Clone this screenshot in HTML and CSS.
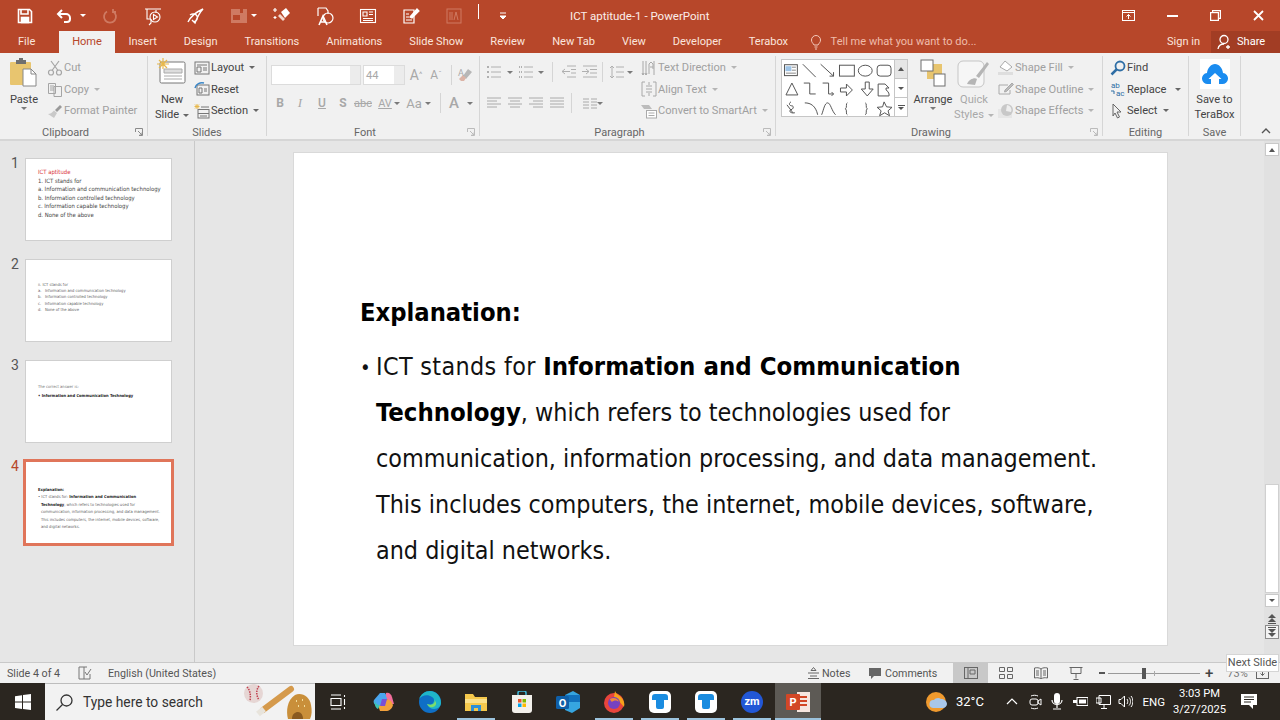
FILE: index.html
```html
<!DOCTYPE html>
<html lang="en">
<head>
<meta charset="utf-8">
<title>ICT aptitude-1 - PowerPoint</title>
<link rel="stylesheet" href="styles.css">
</head>
<body>
<div class="app">
  <header class="titlebar">
    <div class="qat">
      <span class="s"><svg width="16" height="16" viewBox="0 0 16 16" fill="none" stroke="#fff" stroke-width="1.6"><path d="M1.5 1.5h11l2 2v11h-13z"/><path d="M4 2v4h7V2" /><rect x="4.5" y="9.5" width="7" height="5" fill="#fff"/></svg></span>
      <span class="s d40"><svg width="18" height="16" viewBox="0 0 18 16" fill="none" stroke="#fff" stroke-width="2"><path d="M6 2 2 6l4 4"/><path d="M2 6h8a4 4 0 0 1 4 4v1a3 3 0 0 1-3 3H8"/></svg></span>
      <span class="s d18"><i class="caret white"></i></span>
      <span class="s d27 off"><svg width="16" height="16" viewBox="0 0 16 16" fill="none" stroke="#cf7a62" stroke-width="1.8"><path d="M5 3.500a6 6 0 1 0 6 0"/><path d="M11 1v3h3"/></svg></span>
      <span class="s d43"><svg width="20" height="20" viewBox="0 0 20 20" fill="none" stroke="#fff" stroke-width="1.1"><path d="M2 3h16M4 3v10h3M8 13v4l-2 2M13 4v3"/><circle cx="12" cy="11" r="5"/><path d="m10.5 8.500 4 2.500-4 2.500z"/></svg></span>
      <span class="s d43"><svg width="20" height="20" viewBox="0 0 20 20" fill="none" stroke="#fff" stroke-width="1.4"><path d="M2 16c3-6 8-10 15-13-4 4-6 9-8 14l-3-3M4 9c3-2 6-1 7 1s0 5-3 6"/></svg></span>
      <span class="s d43 off"><svg width="20" height="18" viewBox="0 0 20 18"><rect x="2" y="2" width="16" height="14" fill="#cf7a62"/><rect x="4" y="8" width="7" height="5" fill="#b7472a"/><rect x="11" y="2" width="3" height="4" fill="#b7472a"/></svg></span>
      <span class="s d15"><i class="caret white"></i></span>
      <span class="s d28"><svg width="20" height="20" viewBox="0 0 20 20"><path d="m9 6 5-4 4 5-5 5z" fill="#fff"/><path d="m8 8 5 5-2 2-5-5z" fill="#f6d9ce"/><path d="M3 2v4M1 4h4M3 10v3M1.500 11.500h3" stroke="#fff" stroke-width="1.200"/></svg></span>
      <span class="s d43"><svg width="20" height="20" viewBox="0 0 20 20" fill="none" stroke="#fff" stroke-width="1.200"><path d="M3 2h8l2 3v3"/><path d="M3 2v8"/><circle cx="13" cy="12" r="5"/><path d="m4 19 4-9 4 9M6 16h4" stroke-width="1.600"/></svg></span>
      <span class="s d43"><svg width="18" height="16" viewBox="0 0 18 16" fill="none" stroke="#fff" stroke-width="1.100"><rect x="1.500" y="1.500" width="15" height="13"/><path d="M4 4h4v4H4zM10 4h4M10 6.500h4M4 10.500h10M4 12.500h10"/></svg></span>
      <span class="s d43"><svg width="18" height="18" viewBox="0 0 18 18" fill="none" stroke="#fff" stroke-width="1.200"><path d="M2 3h10v13H2z"/><path d="M4 7h3M4 10h3M4 13h6"/><path d="m8 10 7-8 2 2-7 7z" fill="#fff"/></svg></span>
      <span class="s d43 off"><svg width="16" height="16" viewBox="0 0 16 16" fill="none" stroke="#cf7a62"><rect x="1" y="1" width="14" height="14"/><path d="M4 4v8M6 4v8M8 12l2-8 2 8"/></svg></span>
      <span class="s d24"><i class="qline"></i></span>
      <span class="s d25"><svg width="8" height="8" viewBox="0 0 8 8"><path d="M1 1h6M1 4h6l-3 3z" stroke="#fff" fill="#fff" stroke-width="1"/></svg></span>
    </div>
    <div class="wintitle">ICT aptitude-1 - PowerPoint</div>
    <div class="winctrls">
      <svg width="13" height="11" viewBox="0 0 13 11" fill="none" stroke="#fff"><rect x=".5" y=".5" width="12" height="10"/><path d="M.5 2.500h12M6.500 9V4.500M4.500 6.500l2-2 2 2" /></svg>
      <i class="winmin"></i>
      <svg width="11" height="11" viewBox="0 0 11 11" fill="none" stroke="#fff" stroke-width="1.200"><rect x=".6" y="2.600" width="7.800" height="7.800"/><path d="M2.600 2.600V.6h7.800v7.800H8.400"/></svg>
      <svg width="11" height="11" viewBox="0 0 11 11" stroke="#fff" stroke-width="1.800"><path d="m1 1 9 9M10 1l-9 9"/></svg>
    </div>
  </header>

  <nav class="tabs">
    <span class="file">File</span>
    <span class="tab active">Home</span>
    <span class="tab">Insert</span>
    <span class="tab">Design</span>
    <span class="tab">Transitions</span>
    <span class="tab">Animations</span>
    <span class="tab">Slide Show</span>
    <span class="tab">Review</span>
    <span class="tab">New Tab</span>
    <span class="tab">View</span>
    <span class="tab">Developer</span>
    <span class="tab">Terabox</span>
    <span class="tell"><svg width="12" height="15" viewBox="0 0 12 15" fill="none" stroke="#f3c9bb"><path d="M4 10C3 8 1.500 7.500 1.500 5a4.500 4.500 0 0 1 9 0C10.500 7.500 9 8 8 10zM4.500 12h3M5 14h2"/></svg>Tell me what you want to do...</span>
    <span class="signin">Sign in</span>
    <span class="share"><svg width="16" height="16" viewBox="0 0 16 16" fill="none" stroke="#fff" stroke-width="1.300"><circle cx="7" cy="5.500" r="4"/><path d="M1 15c.5-3 3-5 6-5M11 11v4M9 13h4"/></svg>Share</span>
  </nav>

  <section class="ribbon">
    <div class="group g-clip">
      <div class="gbody">
        <div class="big w40">
          <div class="bigicon"><svg width="28" height="30" viewBox="0 0 28 30"><rect x="0" y="4" width="21" height="23" rx="1" fill="#e8c56f"/><path d="M6 2h3V0h4v2h3v4H6z" fill="#6f6f6f"/><path d="M13 11h8l5 5v12H13z" fill="#fff" stroke="#888"/><path d="M21 11v5h5" fill="none" stroke="#888"/></svg></div>
          <span>Paste</span><i class="caret"></i>
        </div>
        <div class="rows">
          <div class="row off"><svg class="ico" viewBox="0 0 16 16" fill="none" stroke="#a5a5a5" stroke-width="1.200"><circle cx="4" cy="12.500" r="2.500"/><circle cx="12" cy="12.500" r="2.500"/><path d="M5 10.500 12 1M11 10.500 4 1"/></svg>Cut</div>
          <div class="row off"><svg class="ico" viewBox="0 0 16 16" fill="none" stroke="#a5a5a5"><path d="M1.500 2.500h7v10h-7zM3 5h4M3 7h4M3 9h4M7 5.500h7.500v10H7z"/></svg>Copy<i class="caret ml"></i></div>
          <div class="row off"><svg class="ico" viewBox="0 0 16 16"><path d="m8 7 5-5 2 2-5 5z" fill="#9a9a9a"/><path d="M7 7.500 10 10l-3 5-6-4c2 0 4-1 6-3.500z" fill="#c9c9c9"/></svg>Format Painter</div>
        </div>
      </div>
      <div class="glabel"><span></span><span>Clipboard</span><svg class="launch" viewBox="0 0 8 8" fill="none" stroke="#8a8a8a"><path d="M.5 4V.5H7.500V7.500H4M3 3l4 4M7 4.500V7H4.500"/></svg></div>
    </div>

    <div class="group g-slides">
      <div class="gbody">
        <div class="big w40">
          <div class="bigicon"><svg width="30" height="30" viewBox="0 0 30 30"><rect x="3" y="4" width="25" height="21" rx="1.500" fill="#fff" stroke="#777"/><path d="M7 15h18v-4H7zM7 18h18M7 21h18" fill="#ddd" stroke="#aaa"/><path d="M6 0v11M0 6h12M2 2l8 8M10 2l-8 8" stroke="#e8b84a" stroke-width="1.200"/></svg></div>
          <span>New</span><span>Slide<i class="caret ml2"></i></span>
        </div>
        <div class="rows">
          <div class="row"><svg class="ico" viewBox="0 0 16 16" fill="none" stroke="#777"><rect x="1" y="2" width="14" height="12"/><path d="M3 5h10M3 7h4v5H3zM9 8h4M9 10h4" /></svg>Layout<i class="caret ml2"></i></div>
          <div class="row"><svg class="ico" viewBox="0 0 16 16" fill="none" stroke="#777"><rect x="3" y="4" width="12" height="10"/><path d="M5 7h3v5H5zM10 8h3M10 10h3"/><path d="M1 7c1-4 5-6 9-5" stroke="#3a87c8" stroke-width="1.500"/></svg>Reset</div>
          <div class="row"><svg class="ico" viewBox="0 0 16 16" fill="none" stroke="#777"><rect x="4" y="6.500" width="11" height="8.500"/><path d="M4 10.500h11M6 13h7M7 4h8"/><path d="M3 1v5M.5 3.500h5M1 1.500l4 4M5 1.500l-4 4" stroke="#e8b84a"/></svg>Section<i class="caret ml2"></i></div>
        </div>
      </div>
      <div class="glabel"><span></span><span>Slides</span><span></span></div>
    </div>

    <div class="group g-font">
      <div class="gbody col">
        <div class="fontrow1">
          <div class="combo wide"><i class="caret"></i></div>
          <div class="combo narrow"><span>44</span><i class="caret"></i></div>
          <span class="s d21 gt">A<sup>^</sup></span>
          <span class="s d20 gts">A<sup>ˇ</sup></span>
          <span class="s d15"><i class="vsep"></i></span>
          <span class="s d14"><svg width="16" height="16" viewBox="0 0 16 16"><path d="m6 9 5-7 4 3-6 7z" fill="#b7b7b7"/><path d="M2 12 6 8l3 3-2 3H4z" fill="#dbb3a6"/><text x="1" y="9" font-size="9" fill="#aaa" font-family="Roboto, sans-serif">A</text></svg></span>
        </div>
        <div class="fontrow2">
          <span class="s first t-b">B</span>
          <span class="s d20 t-i">I</span>
          <span class="s d22 t-u">U</span>
          <span class="s d21 t-b">S</span>
          <span class="s d20 t-abc">abc</span>
          <span class="s d22 t-av">AV</span>
          <span class="s d12"><i class="caret"></i></span>
          <span class="s d17 t-g">Aa</span>
          <span class="s d14"><i class="caret"></i></span>
          <span class="s d12"><i class="vsep"></i></span>
          <span class="s d14 t-a">A</span>
          <span class="s d16"><i class="caret"></i></span>
        </div>
      </div>
      <div class="glabel"><span></span><span>Font</span><svg class="launch" viewBox="0 0 8 8" fill="none" stroke="#bbb"><path d="M.5 4V.5H7.500V7.500H4M3 3l4 4M7 4.500V7H4.500"/></svg></div>
    </div>

    <div class="group g-para">
      <div class="gbody">
        <div class="paraleft">
          <div class="pararow1">
            <span class="s"><svg class="ico" viewBox="0 0 16 16" stroke="#b0b0b0"><path d="M1 3h2M1 8h2M1 13h2" stroke-width="2"/><path d="M5 3h10M5 8h10M5 13h10"/></svg></span>
            <span class="s d16"><i class="caret"></i></span>
            <span class="s d16"><svg class="ico" viewBox="0 0 16 16" stroke="#b0b0b0"><path d="M1 3h3M1 8h3M1 13h3" stroke-width="2" stroke-dasharray="1 1"/><path d="M6 3h9M6 8h9M6 13h9"/></svg></span>
            <span class="s d15"><i class="caret"></i></span>
            <span class="s d11"><i class="vsep"></i></span>
            <span class="s d17"><svg class="ico" viewBox="0 0 16 16" stroke="#b0b0b0" fill="none"><path d="M6 2h9M10 5.500h5M10 9h5M6 13h9M9 7.500H1M4 5 1 7.500 4 10"/></svg></span>
            <span class="s d21"><svg class="ico" viewBox="0 0 16 16" stroke="#b0b0b0" fill="none"><path d="M1 2h14M8 5.500h7M8 9h7M1 13h14M0 7.500h7M4 5l3 2.500L4 10"/></svg></span>
            <span class="s d12"><i class="vsep"></i></span>
            <span class="s d15"><svg class="ico" viewBox="0 0 16 16" stroke="#b0b0b0" fill="none"><path d="M7 3h8M7 8h8M7 13h8M3 2v12M1 4l2-2 2 2M1 12l2 2 2-2"/></svg></span>
            <span class="s d13"><i class="caret"></i></span>
          </div>
          <div class="pararow2">
            <span class="s"><svg class="ico" viewBox="0 0 16 16" stroke="#aaa"><path d="M1 3h14M1 6h10M1 9h14M1 12h10"/></svg></span>
            <span class="s d21"><svg class="ico" viewBox="0 0 16 16" stroke="#aaa"><path d="M1 3h14M3 6h10M1 9h14M3 12h10"/></svg></span>
            <span class="s d21"><svg class="ico" viewBox="0 0 16 16" stroke="#aaa"><path d="M1 3h14M5 6h10M1 9h14M5 12h10"/></svg></span>
            <span class="s d21"><svg class="ico" viewBox="0 0 16 16" stroke="#aaa"><path d="M1 3h14M1 6h14M1 9h14M1 12h14"/></svg></span>
            <span class="s d14"><i class="vsep"></i></span>
            <span class="s d19"><svg class="ico" viewBox="0 0 16 16" stroke="#aaa"><path d="M1 4h6M1 7h6M1 10h6M1 13h6M9 4h6M9 7h6M9 10h6M9 13h6"/></svg></span>
            <span class="s d10 nudge"><i class="caret"></i></span>
          </div>
        </div>
        <div class="rows">
          <div class="row off"><svg class="ico" viewBox="0 0 16 16" fill="none" stroke="#a8a8a8"><path d="M2 1v14M5 1v14M1 13l1 2 1-2M4 13l1 2 1-2M8 14V4l2-2 2 2v5M9 7h3M13 1v14"/></svg>Text Direction<i class="caret ml"></i></div>
          <div class="row off"><svg class="ico" viewBox="0 0 16 16" fill="none" stroke="#a8a8a8"><path d="M1 1v14M1 1h3M1 15h3M15 1v14M15 1h-3M15 15h-3M5 5h6M5 8h6M5 11h6M8 1v3M8 12v3"/></svg>Align Text<i class="caret ml"></i></div>
          <div class="row off"><svg class="ico" viewBox="0 0 16 16"><path d="M0 2h8l3 4H3z" fill="#bcbcbc"/><rect x="5.500" y="7.500" width="10" height="7.500" fill="#fff" stroke="#aaa"/><path d="M7.500 10h6M7.500 12.500h6" stroke="#aaa"/></svg>Convert to SmartArt<i class="caret ml"></i></div>
        </div>
      </div>
      <div class="glabel"><span></span><span>Paragraph</span><svg class="launch" viewBox="0 0 8 8" fill="none" stroke="#bbb"><path d="M.5 4V.5H7.500V7.500H4M3 3l4 4M7 4.500V7H4.500"/></svg></div>
    </div>

    <div class="group g-draw">
      <div class="gbody">
        <div class="gallery">
          <svg width="113" height="56" viewBox="0 0 113 56" fill="none" stroke="#555">
            <rect x="2.500" y="3.500" width="13" height="11" fill="#fff"/><rect x="3.500" y="5" width="6" height="5" fill="#9dc3e6" stroke="none"/><path d="M10 6h4M10 9h4M4 12h10" stroke="#888"/>
            <path d="m21 3 13 13M39 3l13 12M52 15v-4M52 15h-4"/>
            <rect x="58" y="4" width="15" height="11"/><ellipse cx="84" cy="9.500" rx="7" ry="5.500"/><rect x="96" y="4" width="14" height="11" rx="3"/>
            <path d="m10 22 6 12H4zM22 22h6v11h6M41 22h6v11h5M50 31l2 2-2 2M59 27h6v-4l6 6-6 6v-4h-6zM84 21v7h-4l6 7 6-7h-4v-7z"/>
            <path d="M97 23h7l4 4h-3v2a6 6 0 0 1 3 4v2H97z"/>
            <path d="M9 41c-3 2-1 4 1 4s2 3-1 4 0 4 4 3M5 44l6 8" stroke-width="1"/>
            <path d="M23 42c6 0 11 3 13 12M40 54c2-5 3-12 6-12s4 8 8 12"/>
            <path d="M66 42c-2 0 0 5-2 6 2 1 0 6 2 6M84 42c2 0 0 5 2 6-2 1 0 6-2 6" />
            <path d="m103 41 2.500 5 5.500.5-4 3.500 1.500 5-5-3-5 3 1.500-5-4-3.500 5.500-.5z"/>
          </svg>
          <div class="gscroll">
            <span class="gbtn dim"><i class="caret up"></i></span>
            <span class="gbtn"><i class="caret dark"></i></span>
            <span class="gbtn more"><i class="bar"></i><i class="caret dark"></i></span>
          </div>
        </div>
        <div class="big w40 arrange">
          <div class="bigicon"><svg width="28" height="28" viewBox="0 0 28 28"><rect x="8" y="5" width="15" height="15" fill="#e8c56f"/><rect x="2" y="1" width="12" height="11" fill="#fff" stroke="#6f6f6f"/><rect x="15" y="15" width="11" height="12" fill="#fff" stroke="#6f6f6f"/></svg></div>
          <span>Arrange</span><i class="caret"></i>
        </div>
        <div class="big w40 off quick">
          <div class="bigicon"><svg width="34" height="30" viewBox="0 0 34 30"><rect x="1" y="3" width="26" height="26" rx="5" fill="#f6f6f6" stroke="#c5c5c5"/><path d="M10 26c2-5 8-7 10-5l-2 6zM19 18 30 4l2 2-10 14z" fill="#b5b5b5"/></svg></div>
          <span>Quick</span><span>Styles<i class="caret ml"></i></span>
        </div>
        <div class="rows shapes">
          <div class="row off"><svg class="ico" viewBox="0 0 16 16"><path d="m2 7 5-6 7 6-5 4z" fill="#fff" stroke="#aaa"/><rect x="0" y="12" width="15" height="3" fill="#dedede"/></svg>Shape Fill<i class="caret ml"></i></div>
          <div class="row off"><svg class="ico" viewBox="0 0 16 16" fill="none" stroke="#aaa"><path d="M1 4h9M1 4v9h11V9"/><path d="m7 9 7-7 1.500 1.500-7 7-2 .5z" fill="#bbb"/></svg>Shape Outline<i class="caret ml"></i></div>
          <div class="row off"><svg class="ico" viewBox="0 0 16 16"><rect x="0" y="6" width="14" height="9" fill="#e6e6e6"/><circle cx="9" cy="7" r="6" fill="#c8c8c8"/><path d="M9 2a5 5 0 0 1 4 7l-5-1z" fill="#eee"/></svg>Shape Effects<i class="caret ml"></i></div>
        </div>
      </div>
      <div class="glabel"><span></span><span>Drawing</span><svg class="launch" viewBox="0 0 8 8" fill="none" stroke="#bbb"><path d="M.5 4V.5H7.500V7.500H4M3 3l4 4M7 4.500V7H4.500"/></svg></div>
    </div>

    <div class="group g-edit">
      <div class="gbody">
        <div class="rows">
          <div class="row"><svg class="ico" viewBox="0 0 16 16" fill="none" stroke="#2f6ea5" stroke-width="1.800"><circle cx="10" cy="6" r="4.500"/><path d="M7 9l-5.500 5.500" stroke-width="2.500"/></svg>Find</div>
          <div class="row"><svg class="ico" viewBox="0 0 16 16"><text x="1" y="7" font-size="8" fill="#2f6ea5" font-family="Roboto, sans-serif">ab</text><text x="6" y="15" font-size="8" fill="#2f6ea5" font-family="Roboto, sans-serif">ac</text><path d="M1 10h3v3" fill="none" stroke="#2f6ea5"/></svg>Replace<i class="caret ml3"></i></div>
          <div class="row"><svg class="ico" viewBox="0 0 16 16" fill="none" stroke="#666"><path d="m3 1 8 8H7l2.500 5-2 1L5 10l-2 3z"/></svg>Select<i class="caret ml2"></i></div>
        </div>
      </div>
      <div class="glabel"><span></span><span>Editing</span><span></span></div>
    </div>

    <div class="group g-save">
      <div class="gbody">
        <div class="big fill">
          <div class="bigicon"><span class="terabox"><svg width="26" height="22" viewBox="0 0 26 22"><path d="M6 21a5.500 5.500 0 0 1-1-11C5.500 5 9 1 13 1s7.500 4 8 9a5.500 5.500 0 0 1-1 11h-3v-5h2.500L13 10l-6.500 6H9v5z" fill="#1a8cf0"/></svg></span></div>
          <span>Save to</span><span>TeraBox</span>
        </div>
      </div>
      <div class="glabel"><span></span><span>Save</span><span></span></div>
    </div>
    <div class="collapse"><svg width="10" height="6" viewBox="0 0 10 6" fill="none" stroke="#555" stroke-width="1.400"><path d="m1 5 4-4 4 4"/></svg></div>
  </section>

  <main class="workspace">
    <aside class="pane">
      <div class="item"><span class="num">1</span>
        <div class="thumb t1"><p class="red">ICT aptitude</p><p>1. ICT stands for</p><p>a. Information and communication technology</p><p>b. Information controlled technology</p><p>c. Information capable technology</p><p>d. None of the above</p></div>
      </div>
      <div class="item"><span class="num">2</span>
        <div class="thumb t2"><p>ii. ICT stands for</p><p>a.&nbsp;&nbsp; Information and communication technology</p><p>b.&nbsp;&nbsp; Information controlled technology</p><p>c.&nbsp;&nbsp; Information capable technology</p><p>d.&nbsp;&nbsp; None of the above</p></div>
      </div>
      <div class="item"><span class="num">3</span>
        <div class="thumb t3"><p>The correct answer is:</p><p><b>• Information and Communication Technology</b></p></div>
      </div>
      <div class="item cur"><span class="num">4</span>
        <div class="thumb t4"><p><b>Explanation:</b></p><p>• ICT stands for: <b>Information and Communication</b></p><p class="ind"><b>Technology</b>, which refers to technologies used for</p><p class="ind">communication, information processing, and data management.</p><p class="ind">This includes computers, the internet, mobile devices, software,</p><p class="ind">and digital networks.</p></div>
      </div>
    </aside>
    <div class="stage">
      <article class="slide">
        <h1>Explanation:</h1>
        <ul>
          <li><span class="lead">ICT stands for </span><b>Information and Communication<br>Technology</b>, which refers to technologies used for<br>communication, information processing, and data management.<br>This includes computers, the internet, mobile devices, software,<br>and digital networks.</li>
        </ul>
      </article>
    </div>
    <div class="vscroll">
      <span class="sbtn"><i class="caret up dark"></i></span>
      <div class="strack"><span class="sthumb"></span></div>
      <span class="sbtn"><i class="caret dark"></i></span>
      <span class="sbtn plain top"><svg width="10" height="10" viewBox="0 0 10 10" fill="#555"><path d="M5 0 9 4H1zM5 4l4 4H1z"/><path d="M1 9h8v1H1z"/></svg></span>
      <span class="sbtn framed"><svg width="10" height="10" viewBox="0 0 10 10" fill="#555"><path d="M1 0h8v1H1zM5 6 1 2h8zM5 10 1 6h8z"/></svg></span>
    </div>
  </main>

  <footer class="status">
    <span class="st-left">Slide 4 of 4</span>
    <svg class="st-note" width="14" height="14" viewBox="0 0 14 14" fill="none" stroke="#777"><path d="M1 1h5v12H1zM6 1h3M6 13h6V8M7 6l2 3 4-6"/></svg>
    <span class="st-lang">English (United States)</span>
    <span class="st-notes"><svg width="11" height="12" viewBox="0 0 11 12" stroke="#666" fill="none"><path d="M0 6h11M2 9h7M0 11.500h11M3 3.500 5.500.5 8 3.500z"/></svg>Notes</span>
    <span class="st-comments"><svg width="12" height="12" viewBox="0 0 12 12" fill="#666"><path d="M0 1h12v8H5l-3 3V9H0z"/></svg>Comments</span>
    <span class="view on"><svg width="14" height="12" viewBox="0 0 14 12" fill="none" stroke="#666"><rect x=".5" y=".5" width="13" height="11"/><path d="M4 .5v11M6 3h5v4H6z"/></svg></span>
    <span class="view"><svg width="14" height="12" viewBox="0 0 14 12" fill="none" stroke="#666"><path d="M.5.5h5v4h-5zM8.500.5h5v4h-5zM.5 7.500h5v4h-5zM8.500 7.500h5v4h-5z"/></svg></span>
    <span class="view"><svg width="14" height="12" viewBox="0 0 14 12" fill="none" stroke="#666"><path d="M7 2C5 .5 3 .5 .5 1v10c2.500-.5 4.500-.5 6.500 1 2-1.500 4-1.500 6.500-1V1C11 .5 9 .5 7 2zM7 2v10M2 4h3M2 6h3M2 8h3M9 4h3M9 6h3M9 8h3"/></svg></span>
    <span class="view"><svg width="14" height="13" viewBox="0 0 14 13" fill="none" stroke="#666"><path d="M.5.5h13M2 .5v6h10v-6M7 6.500v5M4.500 12.500h5"/></svg></span>
    <span class="zoomer"><i class="zm-minus"></i><span class="zm-track"><i class="zm-tick"></i><i class="zm-thumb"></i></span><span class="zm-plus">+</span></span>
    <span class="zm-val">73%</span>
    <svg class="fit" width="13" height="12" viewBox="0 0 13 12" fill="none" stroke="#666"><rect x=".5" y="2.500" width="12" height="9"/><path d="M6.500 3.500v5M4.500 6.500l2 2 2-2"/></svg>
    <span class="tooltip">Next Slide</span>
  </footer>

  <div class="taskbar">
    <span class="start"><svg width="16" height="16" viewBox="0 0 16 16" fill="#fff"><path d="M0 2.200 7 1.200V7.500H0zM8 1 16 0V7.500H8zM0 8.500h7V15L0 14zM8 8.500h8V16l-8-1.100z"/></svg></span>
    <div class="search">
      <svg width="17" height="17" viewBox="0 0 17 17" fill="none" stroke="#333" stroke-width="1.300"><circle cx="10.500" cy="6.500" r="5.500"/><path d="m6.500 10.500-6 6"/></svg>
      <span>Type here to search</span>
      <svg class="promo" width="72" height="37" viewBox="0 0 72 37">
        <circle cx="10.500" cy="10.500" r="9.500" fill="#e6d6d4"/><path d="M4 4c3 3 4 8 3 14M16 3c-3 4-3 9 0 14" stroke="#c0414f" stroke-width="1.500" fill="none" stroke-dasharray="1.500 1"/>
        <path d="M20 27 48 6" stroke="#d59a4c" stroke-width="6" stroke-linecap="round"/><path d="m15 31 6-5" stroke="#e8e4dc" stroke-width="6"/>
        <path d="M45 36c-2-8-1-19 7-24 7-3 15 2 16 10 1 5 1 10-1 14z" fill="#c98f3a"/><path d="M53 18h1M59 17h1M55 23h1M61 23h1" stroke="#f3dc9a" stroke-width="2"/><path d="M49 36c0-5 3-7 6-7s5 3 5 7" fill="#8a5a20"/>
      </svg>
    </div>
    <div class="apps">
      <span class="app-i"><svg width="16" height="16" viewBox="0 0 16 16" fill="none" stroke="#fff" stroke-width="1.100"><path d="M1 1h10M1 15h10M1 4.500h10v7H1zM14.500 1v2M14.500 5v6M14.500 13v2"/></svg></span>
      <span class="app-i"><svg width="22" height="22" viewBox="0 0 22 22"><path d="M7 2h5l3 5-4 7H4c-3 0-4-3-3-5z" fill="#4aa5ef"/><path d="M13 2c3-1 5 1 6 4l2 7-5 0-3-8z" fill="#f26d9c"/><path d="M5 14l5 0 4-6 4 2 2 4c-1 4-4 6-7 6H7z" fill="#f2a13c"/><path d="M9 8h5l-2 7H7z" fill="#7a4fd6"/><path d="M2 9c0 3 2 5 5 5l-2 4C2 17 1 12 2 9z" fill="#3fc4b0"/></svg></span>
      <span class="app-i"><svg width="22" height="22" viewBox="0 0 22 22"><circle cx="11" cy="11" r="11" fill="#0f6fc6"/><path d="M22 12C22 5 17 0 11 0 6 0 2 3 0 8c3-4 9-5 13-2 2 1 3 4 1 6-1 2-4 2-6 1 1 3 4 5 7 5 4 0 7-3 7-6z" fill="#1fb6c9"/><path d="M8 13c3 1 6 1 7-1 1-1 1-2 0-3 3 2 3 6-1 7-3 1-5-1-6-3z" fill="#7ddc6b"/></svg></span>
      <span class="app-i ul"><svg width="22" height="19" viewBox="0 0 22 19"><path d="M0 2h8l2 3h12v14H0z" fill="#f5c84c"/><path d="M0 7h22v4H0z" fill="#fbe08a"/><path d="M6 19v-6h10v6h-3v-3H9v3z" fill="#2c8fd6"/></svg></span>
      <span class="app-i"><svg width="22" height="22" viewBox="0 0 22 22"><path d="M7 4V2a2 2 0 0 1 2-2h4a2 2 0 0 1 2 2v2" fill="none" stroke="#3fb8d9" stroke-width="1.500"/><path d="M1 4h20v15a3 3 0 0 1-3 3H4a3 3 0 0 1-3-3z" fill="#f3f0eb"/><path d="M7 8h3.500v3.500H7z" fill="#e8532b"/><path d="M11.500 8H15v3.500h-3.500z" fill="#7fba00"/><path d="M7 12.500h3.500V16H7z" fill="#00a4ef"/><path d="M11.500 12.500H15V16h-3.500z" fill="#ffb900"/></svg></span>
      <span class="app-i"><svg width="24" height="22" viewBox="0 0 24 22"><path d="M9 4 17 0l7 4v13l-8 5-7-3z" fill="#36a5e0"/><path d="M9 4h15v7H9z" fill="#1271bd"/><rect x="0" y="5" width="13" height="13" rx="1.500" fill="#0f5fa8"/><text x="6.500" y="15.500" text-anchor="middle" font-size="11" font-weight="700" fill="#fff" font-family="Roboto, sans-serif">O</text></svg></span>
      <span class="app-i ul"><svg width="22" height="22" viewBox="0 0 22 22"><circle cx="11" cy="12" r="10" fill="#e8453c"/><path d="M12 0c1 3 4 4 6 6 3 3 4 7 3 10l-6-7-4-3z" fill="#f7a21b"/><circle cx="11" cy="12" r="6" fill="#7542c0"/><path d="M7 8c3-2 8-1 9 3-2-2-5-2-7 0-1-1-2-2-2-3z" fill="#f0883a"/></svg></span>
      <span class="app-i ul"><span class="tb-app"><svg width="16" height="15" viewBox="0 0 16 15"><path d="M3 0h10a3 3 0 0 1 3 3v3h-4v7a2 2 0 0 1-2 2H6a2 2 0 0 1-2-2V6H0V3a3 3 0 0 1 3-3z" fill="#1a8ce0"/></svg></span></span>
      <span class="app-i ul"><span class="tb-app"><svg width="16" height="15" viewBox="0 0 16 15"><path d="M3 0h10a3 3 0 0 1 3 3v3h-4v7a2 2 0 0 1-2 2H6a2 2 0 0 1-2-2V6H0V3a3 3 0 0 1 3-3z" fill="#1a8ce0"/></svg></span></span>
      <span class="app-i ul"><span class="zm">zm</span></span>
      <span class="app-i ul pp"><svg width="24" height="22" viewBox="0 0 24 22"><rect x="11" y="1" width="13" height="20" fill="#f6e6df"/><path d="M14 5h7v2h-7zM14 9h7v2h-7zM14 13h7v2h-7z" fill="#d24726"/><rect x="0" y="3" width="14" height="16" rx="1" fill="#d24726"/><text x="7" y="15" text-anchor="middle" font-size="11" font-weight="700" fill="#fff" font-family="Roboto, sans-serif">P</text></svg></span>
    </div>
    <div class="tray">
      <svg width="22" height="22" viewBox="0 0 22 22"><circle cx="10" cy="11" r="10" fill="#f09a2e"/><path d="M7 17a4 4 0 0 1 1-8c1-2 5-3 7-1 3 0 6 2 6 5 0 2-2 4-4 4z" fill="#a9c7ea"/></svg>
      <span class="temp">32°C</span>
      <svg class="tr-up" width="12" height="7" viewBox="0 0 12 7" fill="none" stroke="#fff" stroke-width="1.200"><path d="m1 6 5-5 5 5"/></svg>
      <svg class="tr-cam" width="13" height="16" viewBox="0 0 13 16" fill="none" stroke="#fff"><path d="M2 2c2-1 5-1 7 0M2 14c2 1 5 1 7 0"/><rect x="1" y="5" width="8" height="6" rx="2"/><path d="m9 7 3-2v6l-3-2z"/></svg>
      <svg class="tr-mic" width="12" height="17" viewBox="0 0 12 17"><rect x="3" y="0" width="6" height="11" rx="3" fill="#fff"/><path d="M1 7c0 6 10 6 10 0M6 12v3M2 16h8" stroke="#fff" fill="none" stroke-width="1.200"/></svg>
      <svg class="tr-bat" width="15" height="11" viewBox="0 0 15 11" fill="#fff"><rect x="4" y="1.500" width="11" height="8" fill="none" stroke="#fff"/><rect x="6" y="3.500" width="7" height="4"/><path d="M0 4h4v3H0z"/></svg>
      <svg class="tr-net" width="15" height="14" viewBox="0 0 15 14" fill="none" stroke="#fff"><path d="M3 .5h11.500v9H3zM0 3h5v5H0zM8 10v3M5 13.500h6"/></svg>
      <svg class="tr-vol" width="15" height="13" viewBox="0 0 15 13" fill="none" stroke="#fff"><path d="M1 4.500h2L6.500 1v11L3 8.500H1zM9 4c1 1.500 1 3.500 0 5M11 2.500c2 2 2 6 0 8M13 1c2.500 3 2.500 8 0 11"/></svg>
      <span class="eng">ENG</span>
      <span class="clock"><span>3:03 PM</span><span>3/27/2025</span></span>
      <svg class="tr-notif" width="16" height="15" viewBox="0 0 16 15"><path d="M0 0h16v11h-4v4l-4-4H0z" fill="#fff"/><path d="M3 3h10M3 5.500h10M3 8h7" stroke="#2b2620"/></svg>
    </div>
  </div>
</div>
</body>
</html>
```

FILE: styles.css
```css
* { box-sizing: border-box; }
html, body { margin: 0; padding: 0; height: 100%; overflow: hidden; }
body { font-family: Roboto, "Open Sans", sans-serif; font-size: 11.100px; color: #444; }
i { display: block; font-style: normal; }
.app { width: 1280px; height: 720px; display: flex; flex-direction: column; background: #e6e6e6; position: relative; overflow: hidden; }

/* shared slots: 20px cells placed by the distance between their centres */
.s { width: 20px; flex: none; display: flex; align-items: center; justify-content: center; }
.d10 { margin-left: -10px; } .d11 { margin-left: -9px; } .d12 { margin-left: -8px; } .d13 { margin-left: -7px; }
.d14 { margin-left: -6px; } .d15 { margin-left: -5px; } .d16 { margin-left: -4px; } .d17 { margin-left: -3px; }
.d18 { margin-left: -2px; } .d19 { margin-left: -1px; } .d20 { margin-left: 0; } .d21 { margin-left: 1px; }
.d22 { margin-left: 2px; } .d24 { margin-left: 4px; } .d25 { margin-left: 5px; } .d27 { margin-left: 7px; }
.d28 { margin-left: 8px; } .d40 { margin-left: 20px; } .d43 { margin-left: 23px; }
.caret { width: 0; height: 0; border-left: 3px solid transparent; border-right: 3px solid transparent; border-top: 3px solid #7a7a7a; display: inline-block; vertical-align: middle; }
.caret.white { border-top-color: #fff; }
.caret.dark { border-top-color: #555; }
.caret.up { border-top: 0; border-bottom: 4px solid #555; }
.caret.ml { margin-left: 4px; border-top-color: #b5b5b5; }
.caret.ml2 { margin-left: 4px; border-top-color: #666; }
.caret.ml3 { margin-left: 8px; border-top-color: #666; }
.vsep { width: 1px; height: 20px; background: #d5d5d5; }
.off { color: #a0a0a0; }

/* title bar */
.titlebar { height: 31px; flex: none; background: #b7472a; display: flex; align-items: center; color: #fff; }
.qat { width: 570px; flex: none; padding-left: 15px; display: flex; align-items: center; height: 100%; }
.qat .s { height: 20px; }
.qline { width: 1px; height: 15px; background: #fff; margin-bottom: 8px; }
.wintitle { flex: 1; font-size: 11.500px; color: #fbeee9; }
.winctrls { width: 158px; flex: none; display: flex; align-items: center; justify-content: space-between; padding-right: 16px; }
.winmin { width: 11px; height: 2px; background: #fff; }

/* tabs */
.tabs { height: 22px; flex: none; background: #b7472a; display: flex; align-items: stretch; color: #fbe5dd; line-height: 22px; font-size: 11.050px; }
.tabs > * { flex: none; }
.file { width: 59px; padding-left: 18px; }
.tab { padding: 0 13.500px; white-space: nowrap; }
.tab.active { background: #f1f1f1; color: #b7472a; width: 56px; padding: 0; text-align: center; }
.tell { display: flex; align-items: center; gap: 9px; margin-left: 8px; color: #efbcab; flex: 1 1 0; white-space: nowrap; }
.signin { width: 44px; color: #fbe5dd; }
.share { width: 69px; background: #a23d24; display: flex; align-items: center; gap: 4px; padding-left: 6px; color: #fff; }

/* ribbon */
.ribbon { height: 88px; flex: none; background: #f1f1f1; border-bottom: 2px solid #d6d6d6; display: flex; padding-top: 3px; }
.group { height: 80px; display: flex; flex-direction: column; border-right: 1px solid #d6d6d6; flex: none; }
.gbody { flex: 1; display: flex; min-height: 0; padding-left: 4px; }
.gbody.col { flex-direction: column; }
.glabel { height: 12px; line-height: 18px; display: grid; grid-template-columns: 1fr auto 1fr; color: #666; font-size: 11px; }
.glabel:has(.launch) { padding-right: 16px; }
.launch { width: 8px; height: 8px; justify-self: end; margin: 4px -12px 0 0; }
.g-clip { width: 148px; }
.g-slides { width: 119px; }
.g-font { width: 213px; }
.g-para { width: 296px; }
.g-draw { width: 327px; }
.g-edit { width: 86px; }
.g-save { width: 52px; }
.big { display: flex; flex-direction: column; align-items: center; line-height: 15px; color: #444; flex: none; }
.big > span { white-space: nowrap; }
.big.off, .big.off span { color: #a8a8a8; }
.w40 { width: 40px; }
.big.fill { margin-left: -4px; width: calc(100% + 4px); }
.bigicon { height: 36px; display: flex; align-items: center; justify-content: center; flex: none; padding-bottom: 3px; }
.rows { display: flex; flex-direction: column; flex: none; padding-top: 1px; }
.row { height: 21.500px; display: flex; align-items: center; gap: 1px; white-space: nowrap; }
.ico { width: 16px; height: 16px; flex: none; }
.g-clip .rows { margin-left: 3px; }
.g-slides .rows { margin-left: 2px; }
.g-para .rows { margin-left: 3px; }
.g-edit .gbody { padding-left: 7px; }

.fontrow1 { height: 38px; display: flex; align-items: center; }
.fontrow2 { height: 18px; display: flex; align-items: center; }
.first { margin-left: -1px; }
.combo { height: 20px; background: #fff; border: 1px solid #dcdcdc; display: flex; align-items: center; justify-content: flex-end; }
.combo.wide { width: 90px; margin-right: 2px; }
.combo.narrow { width: 42px; justify-content: space-between; padding-left: 2px; color: #a8a8a8; }
.combo .caret { box-sizing: content-box; border: 0; height: 18px; width: 10px; background: #ececec; position: relative; }
.gt, .gts { color: #a8a8a8; font-size: 14px; line-height: 1; }
.gts { font-size: 12px; }
.gt sup, .gts sup { font-size: 8px; line-height: 0; }
.t-b { font-weight: 700; color: #a8a8a8; font-size: 12px; }
.t-i { font-style: italic; font-family: "Liberation Serif", serif; color: #a8a8a8; font-size: 13px; }
.t-u { text-decoration: underline; color: #a8a8a8; font-weight: 500; font-size: 12px; }
.t-abc { color: #a8a8a8; font-size: 11px; text-decoration: line-through; }
.t-av { color: #a8a8a8; font-size: 11px; text-decoration: underline; }
.t-g { color: #a8a8a8; font-size: 13px; }
.t-a { color: #a8a8a8; font-size: 15px; font-weight: 500; }

.paraleft { width: 154px; flex: none; }
.pararow1 { height: 32px; display: flex; align-items: center; }
.pararow2 { height: 30px; display: flex; align-items: center; }

.gallery { width: 127px; height: 58px; margin-top: 3px; margin-left: 1px; background: #fff; border: 1px solid #c6c6c6; display: flex; flex: none; }
.gallery > svg { flex: 1; margin-top: 1px; }
.gscroll { width: 13px; display: flex; flex-direction: column; border-left: 1px solid #c6c6c6; flex: none; }
.gbtn { flex: 1; display: flex; flex-direction: column; gap: 1px; align-items: center; justify-content: center; border-bottom: 1px solid #c6c6c6; background: #fff; }
.gbtn:last-child { border-bottom: 0; }
.gbtn.dim { background: #e6e6e6; }
.bar { width: 7px; height: 1px; background: #555; }
.arrange { margin-left: 5px; }
.quick { margin-left: 1px; }
.shapes { margin-left: 4px; }

.terabox { width: 30px; height: 30px; background: #fff; display: flex; align-items: center; justify-content: center; margin-top: 3px; }
.collapse { flex: 1; display: flex; align-items: flex-end; justify-content: flex-end; padding: 0 9px 2px 0; height: 80px; }

/* workspace */
.workspace { flex: 1; min-height: 0; display: flex; background: #e6e6e6; }
.pane { width: 195px; flex: none; border-right: 1px solid #c9c9c9; padding-top: 17px; display: flex; flex-direction: column; gap: 18px; }
.item { display: flex; height: 83px; }
.num { width: 25px; flex: none; padding-left: 11px; font-size: 14px; line-height: 14px; margin-top: -2px; color: #555; }
.cur .num { color: #b7472a; }
.thumb { width: 147px; height: 83px; background: #fff; border: 1px solid #cfcfcf; color: #555; overflow: hidden; font-family: "DejaVu Sans", sans-serif; font-stretch: condensed; }
.thumb p { margin: 0; white-space: nowrap; }
.t1 { padding: 9px 0 0 12px; line-height: 8.500px; font-size: 5.900px; color: #444; }
.t1 .red { color: #d9363a; }
.t2 { padding: 22px 0 0 12px; font-size: 4.100px; line-height: 6.200px; color: #666; }
.t3 { padding: 22px 0 0 12px; font-size: 4.100px; line-height: 8.500px; color: #777; }
.t3 b { color: #222; }
.t4 { padding: 23.500px 0 0 12px; font-size: 4.100px; line-height: 7.600px; color: #666; }
.t4 b { color: #222; }
.t4 .ind { padding-left: 3px; }
.cur .thumb { border: 1px solid #e0755a; outline: 2px solid #e0755a; }
.stage { flex: 1; min-width: 0; padding: 11px 0 0 98px; }
.slide { width: 875px; height: 494px; background: #fff; border: 1px solid #d9d9d9; padding: 144px 40px 0 66px; font-family: "DejaVu Sans", sans-serif; font-stretch: condensed; color: #111; white-space: nowrap; }
.slide h1 { margin: 0; font-size: 25.300px; line-height: 32px; font-weight: 700; color: #000; }
.slide ul { margin: 15px 0 0; padding: 0 0 0 16px; list-style: none; }
.slide li { position: relative; font-size: 24.850px; line-height: 46px; }
.slide li::before { content: "•"; position: absolute; left: -16px; font-size: 20px; }
.slide .lead { letter-spacing: .35px; }
.slide b { color: #000; font-size: 25.500px; line-height: 1; }
.vscroll { width: 16px; flex: none; display: flex; flex-direction: column; align-items: center; padding-top: 2px; background: #e1e1e1; }
.sbtn { width: 14px; height: 13px; background: #fff; border: 1px solid #c9c9c9; display: flex; align-items: center; justify-content: center; flex: none; }
.strack { height: 438px; width: 16px; display: flex; flex-direction: column; justify-content: flex-end; padding: 0 1px 1px; }
.sthumb { height: 109px; background: #fff; border: 1px solid #d0d0d0; display: block; }
.sbtn.plain { background: transparent; border-color: transparent; margin-top: 5px; }
.sbtn.framed { border: 1px solid #8c8c8c; background: #f3f3f3; height: 14px; }

/* status */
.status { height: 21px; flex: none; background: #f1f1f1; border-top: 1px solid #c9c9c9; display: flex; align-items: center; color: #555; font-size: 10.700px; position: relative; }
.st-left { margin-left: 7px; width: 71px; flex: none; }
.st-note { flex: none; }
.st-lang { margin-left: 16px; width: 700px; flex: none; white-space: nowrap; }
.st-notes { display: flex; align-items: center; gap: 3px; width: 61px; flex: none; }
.st-comments { display: flex; align-items: center; gap: 4px; width: 84px; flex: none; }
.view { width: 35px; height: 20px; display: flex; align-items: center; justify-content: center; flex: none; }
.view.on { background: #c8c8c8; }
.zoomer { display: flex; align-items: center; margin-left: 6px; flex: none; }
.zm-minus { width: 6px; height: 2px; background: #555; }
.zm-track { width: 92px; height: 1px; background: #999; margin-left: 3px; position: relative; display: block; }
.zm-thumb { position: absolute; left: 34px; top: -5px; width: 4px; height: 11px; background: #555; }
.zm-tick { position: absolute; left: 46px; top: -2px; width: 1px; height: 5px; background: #aaa; }
.zm-plus { font-size: 15px; font-weight: 500; margin-left: 5px; line-height: 1; color: #444; }
.zm-val { margin-left: 14px; font-size: 11px; color: #777; }
.fit { margin-left: 8px; flex: none; }
.tooltip { position: absolute; left: 1226px; top: -9px; width: 53px; height: 18px; background: #fff; border: 1px solid #d5d5d5; font-size: 11px; line-height: 16px; text-align: center; color: #555; white-space: nowrap; }

/* taskbar */
.taskbar { height: 37px; flex: none; background: #2b2620; display: flex; align-items: stretch; color: #fff; }
.start { width: 45px; flex: none; display: flex; align-items: center; justify-content: center; }
.search { width: 270px; flex: none; background: #f2f2f2; display: flex; align-items: center; padding-left: 11px; color: #333; font-size: 13.800px; position: relative; border-top: 1px solid #bdbdbd; }
.search > span { margin-left: 10px; }
.promo { position: absolute; right: 0; top: -1px; }
.apps { display: flex; align-items: stretch; width: 507px; flex: none; }
.app-i { width: 46px; flex: none; display: flex; align-items: center; justify-content: center; position: relative; }
.ul::after { content: ""; position: absolute; left: 4px; right: 4px; bottom: 0; height: 2px; background: #9cc3dd; }
.pp { background: #5d5a55; }
.pp::after { left: 0; right: 0; }
.tb-app { width: 22px; height: 22px; background: #fff; border-radius: 5px; display: flex; align-items: center; justify-content: center; }
.zm { width: 22px; height: 22px; border-radius: 50%; background: #2257d6; color: #fff; font-size: 11px; font-weight: 700; line-height: 21px; text-align: center; display: block; }
.tray { flex: 1; display: flex; align-items: center; padding-left: 104px; }
.tray > svg { flex: none; }
.temp { font-size: 13px; margin-left: 8px; width: 50px; flex: none; }
.tr-cam { margin-left: 10.500px; }
.tr-mic { margin-left: 9.500px; }
.tr-bat { margin-left: 9.500px; }
.tr-net { margin-left: 8px; }
.tr-vol { margin-left: 7px; }
.eng { font-size: 11.500px; margin-left: 10px; width: 26px; flex: none; }
.clock { display: flex; flex-direction: column; align-items: center; font-size: 11.200px; line-height: 16px; width: 62px; flex: none; }
.tr-notif { margin-left: 10px; }
```
